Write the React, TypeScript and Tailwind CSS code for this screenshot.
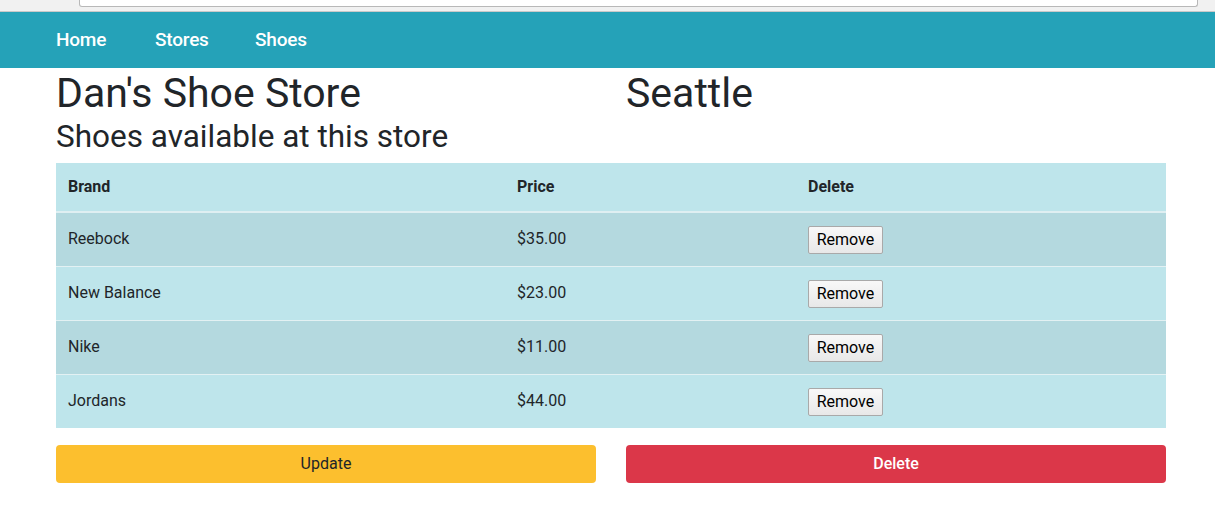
import React from 'react';

const shoes = [
  { brand: 'Reebock', price: '$35.00' },
  { brand: 'New Balance', price: '$23.00' },
  { brand: 'Nike', price: '$11.00' },
  { brand: 'Jordans', price: '$44.00' },
];

export default function App() {
  return (
    <div className="min-h-[513px] bg-white text-[#212529] font-['Roboto',sans-serif]">
      {/* browser chrome strip */}
      <div className="h-[12px] bg-[#f1f1f1] border-b border-[#c9c9c9] pl-[79px] pr-[17px]">
        <div className="h-[7px] bg-white border border-t-0 border-[#b8b8b8] rounded-b-[3px]" />
      </div>

      <nav className="h-[56px] bg-[#25a2b8] flex items-center pl-[56px] text-white text-[19px] font-medium tracking-[-0.2px]">
        <a href="#" className="w-[99px]">Home</a>
        <a href="#" className="w-[100px]">Stores</a>
        <a href="#">Shoes</a>
      </nav>

      <div className="w-[1110px] ml-[56px]">
        <div className="grid grid-cols-2 gap-[30px]">
          <h1 className="text-[41px] leading-[48px] mt-[1px]">Dan's Shoe Store</h1>
          <h1 className="text-[41px] leading-[48px] mt-[1px]">Seattle</h1>
        </div>
        <h2 className="text-[31.5px] leading-[38px] mt-[1px] mb-[7px]">Shoes available at this store</h2>

        <table className="w-full bg-[#bee5eb] text-[16px] border-collapse">
          <thead>
            <tr className="border-b-2 border-[#dfeff2] text-left">
              <th className="h-[49px] px-[12px] font-bold w-[449px]">Brand</th>
              <th className="px-[12px] font-bold w-[291px]">Price</th>
              <th className="px-[12px] font-bold">Delete</th>
            </tr>
          </thead>
          <tbody>
            {shoes.map((s, i) => (
              <tr key={s.brand} className={`border-t border-[#e3f1f3] first:border-t-0 ${i % 2 === 0 ? 'bg-[#b4d9df]' : ''}`}>
                <td className="h-[54px] px-[12px] pb-[1px]">{s.brand}</td>
                <td className="px-[12px] pb-[1px]">{s.price}</td>
                <td className="px-[12px] pt-[2px]">
                  <button className="h-[28px] w-[75px] text-[16px] text-black bg-gradient-to-b from-[#f8f8f8] to-[#e8e8e8] border border-[#a9a9a9] rounded-[2px]">
                    Remove
                  </button>
                </td>
              </tr>
            ))}
          </tbody>
        </table>

        <div className="grid grid-cols-2 gap-[30px] mt-[17px]">
          <button className="h-[38px] rounded-[4px] bg-[#fcbf2e] text-[#212529] text-[16px]">Update</button>
          <button className="h-[38px] rounded-[4px] bg-[#db3749] text-white text-[16px] font-medium">Delete</button>
        </div>
      </div>
    </div>
  );
}
